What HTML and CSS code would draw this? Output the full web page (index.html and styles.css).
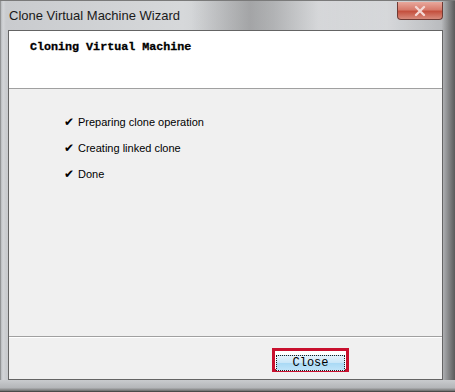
FILE: index.html
```html
<!DOCTYPE html>
<html lang="en">
<head>
    <meta charset="UTF-8">
    <title>Clone Virtual Machine Wizard</title>
    <link rel="stylesheet" href="styles.css">
</head>
<body>
    <div class="window">
        <div class="titlebar">
            <span class="title">Clone Virtual Machine Wizard</span>
            <div class="close-x">
                <svg width="14" height="12" viewBox="0 0 14 12"><path d="M3 2 L11 10 M11 2 L3 10" stroke="#f4d8d4" stroke-width="2.4" stroke-linecap="round"/></svg>
            </div>
        </div>
        <div class="client">
            <div class="header">
                <div class="heading">Cloning Virtual Machine</div>
            </div>
            <div class="content">
                <div class="step"><span class="check">&#10004;</span>Preparing clone operation</div>
                <div class="step"><span class="check">&#10004;</span>Creating linked clone</div>
                <div class="step"><span class="check">&#10004;</span>Done</div>
            </div>
            <div class="footer">
                <div class="btn-outline">
                    <button class="btn">Close</button>
                </div>
            </div>
        </div>
    </div>
</body>
</html>
```

FILE: styles.css
```css
body {
    margin: 0;
    padding: 0;
    background: #ffffff;
}
.window {
    width: 455px;
    height: 392px;
    box-sizing: border-box;
    display: flex;
    flex-direction: column;
    padding: 0 12px 11px 8px;
    background: linear-gradient(90deg, #6c6c6c 0, #b9bcbf 1px, #d3d5d8 3px, #c9cbce 6px, #d6d8da 40%, #c2c4c7 60%, #d0d2d5 85%, #b8babd 97%, #5a5a5a 100%);
    border-bottom: 1px solid #4a4a4a;
    position: relative;
}
.window::after {
    content: "";
    position: absolute;
    left: 0;
    right: 0;
    bottom: 0;
    height: 11px;
    background: linear-gradient(180deg, #c9cbce 0, #b4b6b9 70%, #6e6e6e 100%);
}
.titlebar {
    height: 30px;
    display: flex;
    align-items: flex-start;
    justify-content: space-between;
    background: linear-gradient(90deg, rgba(255,255,255,0) 0, rgba(255,255,255,0) 42%, rgba(110,110,110,0.4) 55%, rgba(255,255,255,0.25) 70%, rgba(255,255,255,0) 100%);
    margin: 0 -12px 0 -8px;
    padding: 0 12px 0 8px;
    border-top: 1px solid #7a7a7a;
    box-sizing: border-box;
}
.title {
    font-family: "Liberation Sans", Arial, sans-serif;
    font-size: 13px;
    color: #1a1a1a;
    margin-top: 7px;
    margin-left: 1px;
}
.close-x {
    width: 46px;
    height: 18px;
    margin-top: 1px;
    margin-right: 0;
    border: 1px solid #6f3a34;
    border-top: none;
    border-radius: 0 0 4px 4px;
    background: linear-gradient(180deg, #e8a89c 0, #d77b6c 45%, #c4503e 55%, #d88b7c 100%);
    display: flex;
    align-items: center;
    justify-content: center;
    box-sizing: border-box;
}
.client {
    flex: 1;
    display: flex;
    flex-direction: column;
    background: #f0f0f0;
    border: 1px solid #646464;
    position: relative;
    z-index: 1;
}
.header {
    height: 57px;
    background: #ffffff;
    border-bottom: 1px solid #a0a0a0;
}
.heading {
    font-family: "Liberation Mono", "Courier New", monospace;
    font-weight: bold;
    font-size: 11.7px;
    color: #000000;
    margin: 9px 0 0 21px;
    -webkit-text-stroke: 0.3px #000000;
}
.content {
    flex: 1;
    padding: 20px 0 0 55px;
    border-bottom: 1px solid #a0a0a0;
}
.step {
    font-family: "Liberation Sans", Arial, sans-serif;
    font-size: 11px;
    color: #000000;
    height: 26px;
    display: flex;
    align-items: center;
}
.check {
    font-size: 12px;
    width: 14px;
    color: #000000;
}
.footer {
    height: 42px;
    border-top: 1px solid #ffffff;
    display: flex;
    justify-content: flex-end;
    padding: 10px 93px 0 0;
    box-sizing: border-box;
}
.btn-outline {
    width: 77px;
    height: 24px;
    border: 3px solid #c8102e;
    box-sizing: border-box;
    background: #ffffff;
    padding: 1px;
}
.btn {
    width: 100%;
    height: 100%;
    margin: 0;
    padding: 0;
    border: 1px dotted #202020;
    background: linear-gradient(180deg, #e4f3fc 0, #c8e6f8 50%, #a9d9f5 51%, #bfe4f9 100%);
    font-family: "Liberation Mono", "Courier New", monospace;
    font-size: 12px;
    color: #000000;
    box-sizing: border-box;
    line-height: 1;
}
```
